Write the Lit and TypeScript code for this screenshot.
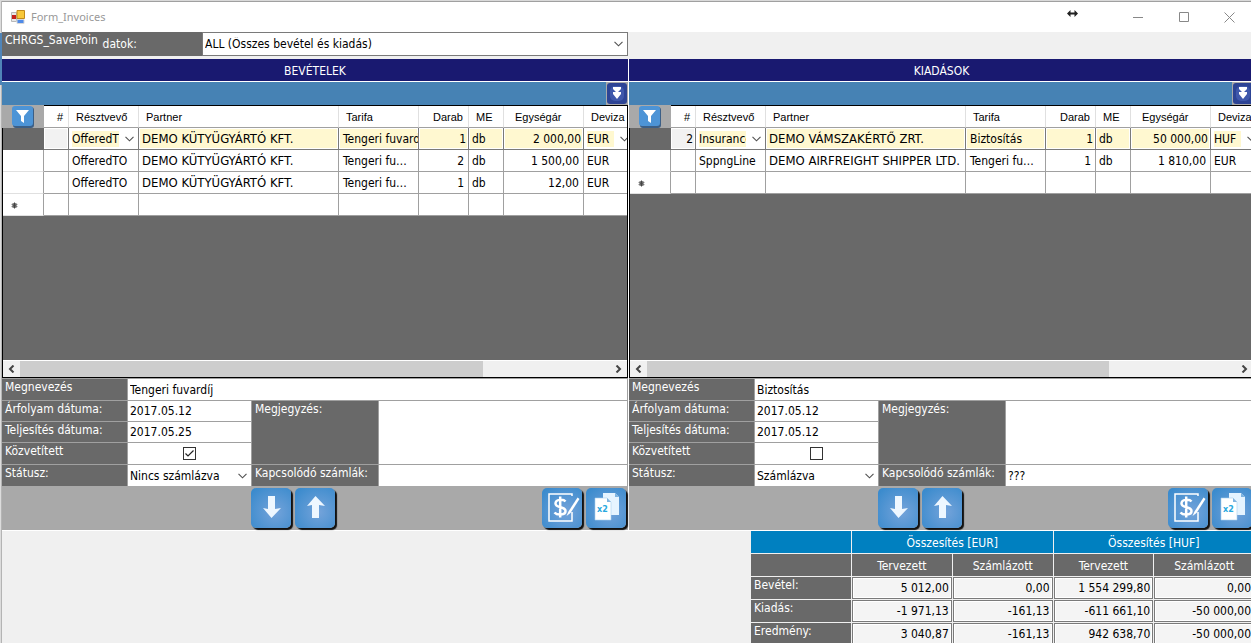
import { LitElement, html, css, svg, nothing } from "lit";
import { customElement, property } from "lit/decorators.js";

interface Row {
  no: string;
  role: string;
  partner: string;
  tariff: string;
  qty: string;
  unit: string;
  price: string;
  currency: string;
}

interface Side {
  id: string;
  title: string;
  rows: Row[];
  name: string;
  rateDate: string;
  doneDate: string;
  mediated: boolean;
  status: string;
  note: string;
  linked: string;
}

const row = (
  no: string, role: string, partner: string, tariff: string,
  qty: string, unit: string, price: string, currency: string,
): Row => ({ no, role, partner, tariff, qty, unit, price, currency });

const income: Side = {
  id: "in",
  title: "BEVÉTELEK",
  rows: [
    row("", "OfferedTO", "DEMO KÜTYÜGYÁRTÓ KFT.", "Tengeri fuvardíj", "1", "db", "2 000,00", "EUR"),
    row("", "OfferedTO", "DEMO KÜTYÜGYÁRTÓ KFT.", "Tengeri fuvardíj", "2", "db", "1 500,00", "EUR"),
    row("", "OfferedTO", "DEMO KÜTYÜGYÁRTÓ KFT.", "Tengeri fuvardíj", "1", "db", "12,00", "EUR"),
  ],
  name: "Tengeri fuvardíj",
  rateDate: "2017.05.12",
  doneDate: "2017.05.25",
  mediated: true,
  status: "Nincs számlázva",
  note: "",
  linked: "",
};

const expense: Side = {
  id: "out",
  title: "KIADÁSOK",
  rows: [
    row("2", "Insurance", "DEMO VÁMSZAKÉRTŐ ZRT.", "Biztosítás", "1", "db", "50 000,00", "HUF"),
    row("", "SppngLine", "DEMO AIRFREIGHT SHIPPER LTD.", "Tengeri fuvardíj", "1", "db", "1 810,00", "EUR"),
  ],
  name: "Biztosítás",
  rateDate: "2017.05.12",
  doneDate: "2017.05.12",
  mediated: false,
  status: "Számlázva",
  note: "",
  linked: "???",
};

const totals = [
  { label: "Bevétel:", values: ["5 012,00", "0,00", "1 554 299,80", "0,00"] },
  { label: "Kiadás:", values: ["-1 971,13", "-161,13", "-611 661,10", "-50 000,00"] },
  { label: "Eredmény:", values: ["3 040,87", "-161,13", "942 638,70", "-50 000,00"] },
];

const chevron = html`<svg class="chevron" width="9" height="6" viewBox="0 0 9 6" aria-hidden="true">
  <path d="M.5 .8 4.5 4.8 8.5 .8" fill="none" stroke="#505050" stroke-width="1.1" /></svg>`;

const buttonFace = svg`<defs><radialGradient id="face" cx=".6" cy=".6" r=".75">
  <stop offset="0" stop-color="#74a3da" /><stop offset="1" stop-color="#3b8bcd" />
  </radialGradient></defs><rect width="40" height="40" rx="5" fill="url(#face)" />`;

const shared = css`
  * {
    box-sizing: border-box;
  }
  button,
  input,
  select,
  textarea {
    font: inherit;
    color: inherit;
    margin: 0;
    padding: 0;
    border: 0;
    border-radius: 0;
    background: none;
    outline: none;
    appearance: none;
  }
  button svg {
    display: block;
  }
  .combo {
    display: grid;
    grid-template-columns: 1fr 17px;
    align-items: center;
    min-width: 0;
    height: 100%;
    background: #fff;
  }
  .combo select {
    grid-area: 1 / 1 / 2 / 3;
    width: 100%;
    min-width: 0;
    height: 100%;
    padding: 0 19px 0 2px;
  }
  .chevron {
    grid-area: 1 / 2 / 2 / 3;
    justify-self: center;
    pointer-events: none;
  }
`;

@customElement("invoice-panel")
export class InvoicePanel extends LitElement {
  @property({ attribute: false }) side: Side = income;

  static styles = [
    shared,
    css`
      :host {
        display: block;
        min-width: 0;
        background: #a9a9a9;
      }
      .title {
        height: 22px;
        margin: 0;
        font-size: 12px;
        font-weight: 400;
        line-height: 24px;
        text-align: center;
        color: #fff;
        background: #191970;
      }
      .strip {
        display: flex;
        justify-content: flex-end;
        height: 24px;
        border-top: 1px solid #fff;
        background: #4682b4;
      }
      .expand {
        width: 22px;
        height: 23px;
        padding: 1px;
        background: #a9a9a9;
      }
      .box {
        position: relative;
        border: 1px solid #000;
        background: #696969;
      }
      .corner {
        position: absolute;
        top: -1px;
        left: -1px;
        display: flex;
        justify-content: center;
        width: 42px;
        height: 23px;
        padding-top: 1px;
        background: #a9a9a9;
      }
      .view {
        height: 254px;
        overflow: hidden;
      }
      table {
        width: 631px;
        table-layout: fixed;
        border-collapse: separate;
        border-spacing: 0;
        background: #fff;
      }
      .c-head { width: 41px; }
      .c-no { width: 25px; }
      .c-role { width: 70px; }
      .c-partner { width: 200px; }
      .c-mid { width: 80px; }
      .c-qty { width: 50px; }
      .c-unit { width: 35px; }
      .c-cur { width: 50px; }
      th,
      td {
        height: 22px;
        padding: 1px 3px 0;
        overflow: hidden;
        text-overflow: ellipsis;
        white-space: nowrap;
        line-height: 20px;
        text-align: left;
        border-right: 1px solid #a0a0a0;
        border-bottom: 1px solid #a0a0a0;
      }
      thead th {
        padding: 1px 7px 0;
        font: 400 11px/20px "Liberation Sans", Arial, sans-serif;
        border-right-color: #e0e0e0;
      }
      thead th.num {
        padding: 1px 5px 0 0;
      }
      thead th.price {
        padding-left: 11px;
      }
      thead th:last-child {
        padding-right: 0;
      }
      .num {
        padding-right: 4px;
        text-align: right;
      }
      .partner {
        font-size: 13px;
      }
      .tariff {
        padding: 1px 6px 0 4px;
      }
      tbody th {
        padding-left: 8px;
        font-weight: 400;
        border-bottom-color: #e0e0e0;
      }
      .current th {
        background: #696969;
        border-color: #696969;
      }
      .current td {
        border-color: #7a7a7a;
        background: #fff8d0;
        box-shadow: inset 0 0 0 1px #fff;
        text-overflow: clip;
      }
      .current .tariff {
        padding-right: 3px;
      }
      .current .num {
        padding-right: 2px;
      }
      .current .no {
        background: #f2f2f2;
      }
      .current .pick {
        padding: 0;
        background: #fff;
      }
      .current .pick .combo {
        height: 20px;
      }
      .current .pick select {
        padding-left: 3px;
        background: linear-gradient(#fff8d0, #fff8d0) 3px 2px / calc(100% - 22px) 16px no-repeat;
      }
      .scroll {
        display: flex;
        align-items: stretch;
        height: 17px;
        border-top: 1px solid #fff;
        background: #f0f0f0;
      }
      .scroll button {
        display: grid;
        place-items: center;
        width: 17px;
      }
      .track {
        flex: 1;
      }
      .thumb {
        width: 78.5%;
        height: 100%;
        background: #cdcdcd;
      }
      .form {
        display: grid;
        grid-template-columns: 125px 123px 126px 1fr;
        grid-template-rows: 21px 20px 20px 21px 21px;
        gap: 1px;
        padding: 1px 1px 0 0;
        background: #a0a0a0;
      }
      .form label {
        padding-left: 3px;
        line-height: 16px;
        color: #fff;
        background: #696969;
      }
      .form input,
      .form textarea {
        width: 100%;
        min-width: 0;
        height: 100%;
        padding: 0 2px;
        color: #000;
        background: #fff;
        resize: none;
      }
      .form .wide {
        grid-column: 2 / 5;
      }
      .form label.tall {
        grid-area: 2 / 3 / 5 / 4;
      }
      .form textarea.tall {
        grid-area: 2 / 4 / 5 / 5;
      }
      .tick {
        display: grid;
        place-items: center;
        background: #fff;
      }
      .form .tick input {
        width: 13px;
        height: 13px;
        padding: 0;
        border: 1px solid #333;
        grid-area: 1 / 1;
      }
      .tick svg {
        grid-area: 1 / 1;
        pointer-events: none;
      }
      .actions {
        display: flex;
        gap: 4px;
        height: 44px;
        padding: 2px 2px 0 249px;
      }
      .actions button {
        width: 40px;
        height: 40px;
        border-radius: 5px;
        box-shadow: 2px 2px 1px #111;
      }
      .gap {
        flex: 1;
      }
    `,
  ];

  private renderRow(r: Row, current: boolean) {
    const pick = (value: string, label: string) =>
      current
        ? html`<div class="combo"><select aria-label=${label}><option>${value}</option></select>${chevron}</div>`
        : value;
    return html`<tr class=${current ? "current" : nothing}>
      <th scope="row"></th>
      <td class="num no">${r.no}</td>
      <td class="pick">${pick(r.role, "Résztvevő")}</td>
      <td class="partner">${r.partner}</td>
      <td class="tariff">${r.tariff}</td>
      <td class="num">${r.qty}</td>
      <td>${r.unit}</td>
      <td class="num">${r.price}</td>
      <td class="pick">${pick(r.currency, "Deviza")}</td>
    </tr>`;
  }

  render() {
    const s = this.side;
    return html`
      <h2 class="title">${s.title}</h2>
      <div class="strip">
        <button class="expand" aria-label="Lenyitás">
          <svg width="20" height="21" viewBox="0 0 20 21">
            <rect width="20" height="21" rx="3" fill="#2d4495" />
            <rect x="3" y="3" width="14" height="15" rx="5" fill="#3f58ab" />
            <path d="M6 4h8v2l-3 3h3v2l-4 5-4-5V9h3L6 6z" fill="#fff" />
          </svg>
        </button>
      </div>
      <div class="box">
        <div class="view">
          <table>
            <colgroup>
              <col class="c-head" /><col class="c-no" /><col class="c-role" /><col class="c-partner" />
              <col class="c-mid" /><col class="c-qty" /><col class="c-unit" /><col class="c-mid" /><col class="c-cur" />
            </colgroup>
            <thead>
              <tr>
                <th></th>
                <th class="num">#</th>
                <th>Résztvevő</th>
                <th>Partner</th>
                <th>Tarifa</th>
                <th class="num">Darab</th>
                <th>ME</th>
                <th class="price">Egységár</th>
                <th>Deviza</th>
              </tr>
            </thead>
            <tbody>
              ${s.rows.map((r, i) => this.renderRow(r, i === 0))}
              <tr>
                <th scope="row">
                  <svg width="7" height="7" viewBox="0 0 7 7">
                    <path d="M3.5 .5v6M.7 2.5l5.6 2M6.300 2.500l-5.600 2M1.800 6l3.400-5M5.200 6 1.800 1" stroke="#444" stroke-width="1" />
                  </svg>
                </th>
                <td></td><td></td><td></td><td></td><td></td><td></td><td></td><td></td>
              </tr>
            </tbody>
          </table>
        </div>
        <div class="scroll">
          <button aria-label="Balra">
            <svg width="7" height="8" viewBox="0 0 7 8"><path d="M5.500 .5 2 4l3.500 3.500" fill="none" stroke="#444" stroke-width="2" /></svg>
          </button>
          <div class="track"><div class="thumb"></div></div>
          <button aria-label="Jobbra">
            <svg width="7" height="8" viewBox="0 0 7 8"><path d="M1.500 .5 5 4 1.500 7.500" fill="none" stroke="#444" stroke-width="2" /></svg>
          </button>
        </div>
        <div class="corner">
          <button aria-label="Szűrő">
            <svg width="22" height="22" viewBox="0 0 22 22">
              <rect x="1" y="1" width="21" height="21" rx="3" fill="#3c5f86" />
              <rect width="21" height="20" rx="3" fill="#4d94d6" />
              <path d="M4 4h13l-5 6v7l-3-2v-5z" fill="#fff" />
            </svg>
          </button>
        </div>
      </div>
      <div class="form">
        <label for="name">Megnevezés</label>
        <input id="name" class="wide" .value=${s.name} />
        <label for="rate">Árfolyam dátuma:</label>
        <input id="rate" .value=${s.rateDate} />
        <label class="tall" for="note">Megjegyzés:</label>
        <textarea id="note" class="tall" .value=${s.note}></textarea>
        <label for="done">Teljesítés dátuma:</label>
        <input id="done" .value=${s.doneDate} />
        <label for="mediated">Közvetített</label>
        <div class="tick">
          <input id="mediated" type="checkbox" .checked=${s.mediated} />
          ${s.mediated
            ? html`<svg width="11" height="11" viewBox="0 0 11 11"><path d="M1.500 5.500 4 8l5.500-5.500" fill="none" stroke="#222" stroke-width="1.200" /></svg>`
            : nothing}
        </div>
        <label for="status">Státusz:</label>
        <div class="combo"><select id="status"><option>${s.status}</option></select>${chevron}</div>
        <label for="linked">Kapcsolódó számlák:</label>
        <input id="linked" .value=${s.linked} />
      </div>
      <div class="actions">
        <button aria-label="Le">
          <svg width="40" height="40" viewBox="0 0 40 40">${buttonFace}
            <path d="M17 8h7v13l6-1-9.500 10L12 20l5 1z" fill="#eef7ff" /></svg>
        </button>
        <button aria-label="Fel">
          <svg width="40" height="40" viewBox="0 0 40 40">${buttonFace}
            <path d="M17 30h7V17l6 1-9.500-10L12 18l5-1z" fill="#eef7ff" /></svg>
        </button>
        <span class="gap"></span>
        <button aria-label="Számlázás">
          <svg width="40" height="40" viewBox="0 0 40 40">${buttonFace}
            <path d="M30 8V6H7v27h23v-9" fill="none" stroke="#fff" stroke-width="1.500" />
            <path d="M23.500 13.500c-2-2.500-10-2.500-10 2 0 5 10 2.500 10 7.500 0 4.500-8.500 4.500-11 1.500M18.200 8.500v21" fill="none" stroke="#fff" stroke-width="2.500" />
            <path d="M35.500 9.500 26.500 23.500l-2 4.500 4-3 9-14z" fill="#fff" />
          </svg>
        </button>
        <button aria-label="Duplikálás">
          <svg width="40" height="40" viewBox="0 0 40 40">${buttonFace}
            <path d="M17 5h12l4 4v18H17z" fill="#e6f4ff" /><path d="M29 5v4h4z" fill="#7fb4e0" />
            <path d="M9 10h12l4 4v18H9z" fill="#fff" stroke="#a9d0ef" stroke-width=".6" />
            <path d="M21 10v4h4z" fill="#7fb4e0" />
            <text x="11" y="24" font-family="DejaVu Sans" font-weight="700" font-size="8" fill="#29a9e0">x2</text>
          </svg>
        </button>
      </div>
    `;
  }
}

@customElement("app-root")
export class AppRoot extends LitElement {
  static styles = [
    shared,
    css`
      :host {
        display: block;
        height: 100vh;
        overflow: hidden;
        padding-left: 2px;
        font: 12px "DejaVu Sans Condensed", "Noto Sans", sans-serif;
        color: #000;
        border-top: 1px solid #d9d9d9;
        background:
          linear-gradient(#4f84b8, #4f84b8) 0 32px / 2px 52px no-repeat,
          linear-gradient(90deg, #dcdcdc 1px, #b4b4b4 1px) 0 0 / 2px 100% no-repeat,
          #f0f0f0;
        box-sizing: border-box;
      }
      .bar {
        display: flex;
        align-items: center;
        height: 31px;
        padding-left: 9px;
        border-top: 1px solid #a0a0a0;
        background: #fff;
      }
      .bar h1 {
        flex: 1;
        margin: 0 0 0 6px;
        font: 400 11px/16px "Noto Sans", sans-serif;
        color: #999;
      }
      .resize {
        margin: 0 37px 8px 0;
      }
      .bar button {
        display: grid;
        place-items: center;
        width: 46px;
        height: 28px;
      }
      .bar button:last-child {
        width: 44px;
      }
      .filter {
        position: relative;
        display: grid;
        grid-template-columns: 200px 426px;
        height: 22px;
        margin-bottom: 5px;
      }
      .filter > label {
        padding-left: 94px;
        line-height: 24px;
        color: #fff;
        background: #696969;
      }
      .savepoint {
        position: absolute;
        top: 0;
        left: 0;
        width: 100px;
        padding-left: 3px;
        line-height: 16px;
        color: #fff;
        background: #696969;
      }
      .filter .combo {
        border: 1px solid #7a7a7a;
      }
      .panels {
        display: grid;
        grid-template-columns: 50% 1fr;
        gap: 1px;
        margin-right: -3px;
        border-bottom: 1px solid #fff;
        background: #fff;
      }
      .totals {
        width: 504px;
        margin: 0 -4px 0 auto;
        table-layout: fixed;
        border-collapse: separate;
        border-spacing: 0;
      }
      .totals col:first-child {
        width: 101px;
      }
      .totals th,
      .totals td {
        height: 23px;
        padding: 0;
        font-weight: 400;
        line-height: 20px;
        border: solid #f0f0f0;
        border-width: 0 1px 1px 0;
      }
      .totals th {
        color: #fff;
        background: #696969;
      }
      .totals .unit th,
      .totals .unit td {
        background: #0080c0;
      }
      .totals .kind td {
        background: #696969;
      }
      .totals thead th {
        padding-top: 1px;
      }
      .totals tbody th {
        padding-left: 3px;
        line-height: 16px;
        text-align: left;
        vertical-align: top;
      }
      .totals output {
        display: block;
        height: 22px;
        padding-right: 2px;
        border: 1px solid #7a7a7a;
        box-shadow: inset 0 0 0 1px #fff;
        background: #f4f4f4;
        text-align: right;
      }
    `,
  ];

  render() {
    return html`
      <header class="bar">
        <svg width="14" height="14" viewBox="0 0 14 14" aria-hidden="true">
          <path d="M.5 2.500h5v9h-5z" fill="#e8e8e8" stroke="#b8b8b8" />
          <path d="M6 .5h7.500v8H6z" fill="#f8c839" stroke="#c28a1a" />
          <path d="M1 5h4v4H1z" fill="#c4201c" />
          <path d="M6 9.500h7v4H6z" fill="#4f8ae8" stroke="#d8d8d8" />
        </svg>
        <h1>Form_Invoices</h1>
        <svg class="resize" width="11" height="7" viewBox="0 0 11 7" aria-hidden="true">
          <path d="M0 3.500 3.500 0v2.500h4V0L11 3.500 7.500 7V4.500h-4V7z" fill="#222" />
        </svg>
        <button aria-label="Kis méret"><svg width="11" height="11"><path d="M0 5.500h10" stroke="#888" /></svg></button>
        <button aria-label="Teljes méret"><svg width="11" height="11"><path d="M.5 .5h9v9h-9z" fill="none" stroke="#888" /></svg></button>
        <button aria-label="Bezárás"><svg width="11" height="11"><path d="M.5 .5l10 10m0-10-10 10" stroke="#888" /></svg></button>
      </header>
      <div class="filter">
        <label for="scope">adatok:</label>
        <div class="combo">
          <select id="scope"><option>ALL (Összes bevétel és kiadás)</option></select>${chevron}
        </div>
        <span class="savepoint">CHRGS_SavePoin</span>
      </div>
      <main class="panels">
        <invoice-panel .side=${income}></invoice-panel>
        <invoice-panel .side=${expense}></invoice-panel>
      </main>
      <table class="totals">
        <colgroup><col /><col /><col /><col /><col /></colgroup>
        <thead>
          <tr class="unit">
            <td></td>
            <th colspan="2">Összesítés [EUR]</th>
            <th colspan="2">Összesítés [HUF]</th>
          </tr>
          <tr class="kind">
            <td></td>
            <th>Tervezett</th><th>Számlázott</th><th>Tervezett</th><th>Számlázott</th>
          </tr>
        </thead>
        <tbody>
          ${totals.map(
            (t) => html`<tr>
              <th scope="row">${t.label}</th>
              ${t.values.map((v) => html`<td><output>${v}</output></td>`)}
            </tr>`,
          )}
        </tbody>
      </table>
    `;
  }
}
